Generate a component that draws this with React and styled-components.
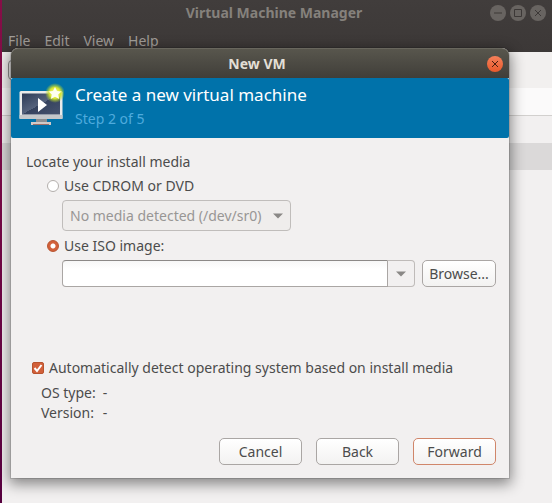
import React, { useState } from 'react';
import styled, { createGlobalStyle } from 'styled-components';

const GlobalStyle = createGlobalStyle`
    * {
        box-sizing: border-box;
    }
    body {
        margin: 0;
        background: #f2f0f0;
        color: #4c4c4c;
        font: 14px/20px "Noto Sans", sans-serif;
    }
    button, input, select {
        margin: 0;
        font: inherit;
        color: inherit;
    }
`;

const Desktop = styled.div`
    position: relative;
    min-height: 100vh;
    border-left: 2px solid;
    border-image: linear-gradient(#860e47, #56003f) 1;
    overflow: hidden;
`;

const ManagerHeader = styled.header`
    background: linear-gradient(#413d3c, #3c3837);
    color: #a19d98;
`;

const ManagerTitle = styled.div`
    display: grid;
    grid-template-columns: 1fr auto 1fr;
    align-items: center;
    height: 26px;
    padding-right: 6px;
    color: #85817c;

    h1 {
        grid-column: 2;
        margin: 0;
        font-size: 14px;
    }
`;

const WindowControls = styled.div`
    display: flex;
    justify-content: flex-end;
    gap: 4px;
`;

const RoundButton = styled.button`
    display: flex;
    width: 16px;
    height: 16px;
    padding: 0;
    border: 0;
    border-radius: 50%;
    background: ${(props) => (props.$active ? 'linear-gradient(#f5805a, #e9592b)' : '#686461')};
    color: ${(props) => (props.$active ? '#4a1f10' : '#3c3837')};

    svg {
        width: 16px;
        height: 16px;
        fill: none;
        stroke: currentColor;
    }
`;

const MenuBar = styled.nav`
    display: flex;
    gap: 14px;
    height: 26px;
    padding: 5px 6px;

    button {
        padding: 0;
        border: 0;
        background: none;
        line-height: 20px;
    }
`;

const Toolbar = styled.div`
    height: 36px;
    padding: 8px 6px;
    background: #f2f0ef;
`;

const ToolbarItem = styled.div`
    width: 34px;
    height: 20px;
    border: 1px solid #8f8d8b;
    border-radius: 4px;
`;

const ListHeader = styled.div`
    height: 28px;
    padding: 4px 6px;
    border-bottom: 1px solid #d2d0ce;
    background: #fbfafa;
`;

const ListRow = styled.div`
    height: 27px;
    background: ${(props) => (props.$selected ? '#dbd9d9' : '#f2f0f0')};
`;

const Dialog = styled.section`
    position: absolute;
    top: 48px;
    left: 9px;
    right: 43px;
    border-radius: 7px 7px 0 0;
    background: #f2f0f0;
    box-shadow: 0 4px 14px 2px rgba(0, 0, 0, 0.45), 0 0 0 1px rgba(0, 0, 0, 0.12);
`;

const DialogTitle = styled.div`
    display: grid;
    grid-template-columns: 1fr auto 1fr;
    align-items: center;
    justify-items: end;
    height: 30px;
    padding-right: 6px;
    border-top: 1px solid #69675e;
    border-radius: 7px 7px 0 0;
    background: linear-gradient(#58564d, #403e39);
    color: #e3dfd6;

    h2 {
        grid-column: 2;
        margin: 0;
        font-size: 14px;
    }
`;

const Banner = styled.header`
    display: flex;
    gap: 11px;
    height: 60px;
    padding: 5px 8px;
    border-radius: 2px;
    background: #0072aa;
    color: #fff;

    h3 {
        margin: 0;
        font-size: 17px;
        font-weight: normal;
        line-height: 24px;
    }
    p {
        margin: 2px 0 0;
        color: #4fabdd;
    }
`;

const BannerIcon = styled.svg`
    width: 45px;
    height: 43px;
`;

const Form = styled.form`
    padding: 12px 13px 13px 15px;
`;

const Line = styled.div`
    line-height: 24px;
`;

const Option = styled.label`
    display: flex;
    align-items: center;
    gap: 5px;
    height: 24px;
    margin-left: ${(props) => props.$indent || 0}px;
`;

const Radio = styled.input`
    appearance: none;
    width: 12px;
    height: 12px;
    border: 1px solid #b3afac;
    border-radius: 50%;
    background: #fff;

    &:checked {
        border-color: #b8532e;
        background: radial-gradient(circle, #fff 2px, #d2603a 3px);
    }
`;

const TickBox = styled.span`
    display: grid;

    input, svg {
        grid-area: 1 / 1;
        width: 12px;
        height: 12px;
    }
    input {
        appearance: none;
        border: 1px solid #b3afac;
        border-radius: 2px;
        background: #fff;
    }
    input:checked {
        border-color: #b8532e;
        background: #d2603a;
    }
    svg {
        fill: none;
        stroke: #fff;
        stroke-width: 2;
        pointer-events: none;
    }
    input:not(:checked) + svg {
        visibility: hidden;
    }
`;

const Fields = styled.div`
    display: flex;
    gap: 7px;
    margin: 2px 0 3px 36px;
`;

const SelectBox = styled.div`
    display: grid;
    align-items: center;

    select {
        grid-area: 1 / 1;
        appearance: none;
        height: 31px;
        padding: 0 28px 0 7px;
        border: 1px solid #c0bdbb;
        border-radius: 4px;
        background: #efedec;
        color: #989695;
        opacity: 1;
    }
    svg {
        grid-area: 1 / 1;
        justify-self: end;
        margin-right: 8px;
        pointer-events: none;
    }
`;

const Combo = styled.div`
    display: flex;
    flex: 1;
    height: 27px;

    input {
        flex: 1;
        min-width: 0;
        padding: 0 6px;
        border: 1px solid #aaa6a4;
        border-top-color: #8c8987;
        border-radius: 4px 0 0 4px;
        background: linear-gradient(#f7f7f7, #fff 8px);
    }
    button {
        width: 27px;
        padding: 0;
        border: 1px solid #bfbbb9;
        border-left: 0;
        border-radius: 0 4px 4px 0;
        background: #f2f0f0;
        line-height: 0;
    }
`;

const Button = styled.button`
    width: ${(props) => props.$width || 83}px;
    height: 27px;
    padding: 0;
    border: 1px solid ${(props) => (props.$primary ? '#d0866a' : '#aaa6a4')};
    border-radius: 5px;
    background: linear-gradient(#fff, #f3f2f1);
    line-height: 20px;
`;

const Details = styled.dl`
    display: grid;
    grid-template-columns: auto 1fr;
    column-gap: 7px;
    margin: 3px 0 0 15px;

    dd {
        margin: 0;
    }
`;

const Actions = styled.div`
    display: flex;
    justify-content: flex-end;
    gap: 14px;
    margin-top: 15px;
`;

const Spacer = styled.div`
    height: 66px;
`;

const menus = ['File', 'Edit', 'View', 'Help'];

const controls = [
    { name: 'Minimize', path: 'M4 8h8' },
    { name: 'Maximize', path: 'M4.5 4.5h7v7h-7z' },
    { name: 'Close', path: 'M5 5l6 6M11 5l-6 6' }
];

function Arrow() {
    return (
        <svg width="10" height="6" viewBox="0 0 10 6" fill="#8a8886">
            <path d="M0 0.5h10L5 5.5z" />
        </svg>
    );
}

function VmIcon() {
    return (
        <BannerIcon viewBox="0 0 45 43" aria-hidden="true">
            <defs>
                <linearGradient id="screen" x1="0" y1="0" x2="1" y2="1">
                    <stop offset="0" stopColor="#2c3a56" />
                    <stop offset="0.5" stopColor="#56637d" />
                    <stop offset="0.5" stopColor="#35425e" />
                    <stop offset="1" stopColor="#46536f" />
                </linearGradient>
                <radialGradient id="glow">
                    <stop offset="0" stopColor="#fbffb0" />
                    <stop offset="0.55" stopColor="#d8e62e" />
                    <stop offset="1" stopColor="#a9cf2a" stopOpacity="0" />
                </radialGradient>
            </defs>
            <rect x="0.5" y="8" width="43" height="28" rx="1.5" fill="#e9eaea" />
            <rect x="0.5" y="32" width="43" height="4" fill="#c4c7ca" />
            <rect x="3" y="10.5" width="38" height="21" fill="url(#screen)" />
            <path d="M19 15v14l9-7z" fill="#fff" />
            <path d="M17 36h11v3H17z" fill="#8d8f92" />
            <path d="M12 39h20v3H12z" fill="#d1cac8" />
            <path d="M14 41h16v1H14z" fill="#9b6f68" />
            <circle cx="36" cy="10" r="10" fill="url(#glow)" />
            <path d="M36 4l2 4 4.500.5-3.300 3 1 4.500-4.200-2.200-4.200 2.200 1-4.500-3.300-3L34 8z" fill="#fffff0" />
        </BannerIcon>
    );
}

function App() {
    const [source, setSource] = useState('iso');
    const [detect, setDetect] = useState(true);

    return (
        <Desktop>
            <GlobalStyle />
            <ManagerHeader>
                <ManagerTitle>
                    <h1>Virtual Machine Manager</h1>
                    <WindowControls>
                        {controls.map((control) => (
                            <RoundButton key={control.name} aria-label={control.name}>
                                <svg viewBox="0 0 16 16"><path d={control.path} /></svg>
                            </RoundButton>
                        ))}
                    </WindowControls>
                </ManagerTitle>
                <MenuBar>
                    {menus.map((menu) => <button key={menu}>{menu}</button>)}
                </MenuBar>
            </ManagerHeader>
            <Toolbar><ToolbarItem /></Toolbar>
            <ListHeader />
            <ListRow />
            <ListRow $selected />

            <Dialog role="dialog" aria-labelledby="dialog-title">
                <DialogTitle>
                    <h2 id="dialog-title">New VM</h2>
                    <RoundButton $active aria-label="Close dialog">
                        <svg viewBox="0 0 16 16"><path d="M5 5l6 6M11 5l-6 6" /></svg>
                    </RoundButton>
                </DialogTitle>
                <Banner>
                    <VmIcon />
                    <div>
                        <h3>Create a new virtual machine</h3>
                        <p>Step 2 of 5</p>
                    </div>
                </Banner>
                <Form onSubmit={(e) => e.preventDefault()}>
                    <Line>Locate your install media</Line>
                    <Option $indent={21}>
                        <Radio
                            type="radio"
                            name="source"
                            checked={source === 'cdrom'}
                            onChange={() => setSource('cdrom')}
                        />
                        Use CDROM or DVD
                    </Option>
                    <Fields>
                        <SelectBox>
                            <select disabled aria-label="CDROM or DVD device">
                                <option>No media detected (/dev/sr0)</option>
                            </select>
                            <Arrow />
                        </SelectBox>
                    </Fields>
                    <Option $indent={21}>
                        <Radio
                            type="radio"
                            name="source"
                            checked={source === 'iso'}
                            onChange={() => setSource('iso')}
                        />
                        Use ISO image:
                    </Option>
                    <Fields>
                        <Combo>
                            <input type="text" aria-label="ISO image path" />
                            <button type="button" aria-label="Recent images"><Arrow /></button>
                        </Combo>
                        <Button type="button" $width={74}>Browse...</Button>
                    </Fields>
                    <Spacer />
                    <Option $indent={6}>
                        <TickBox>
                            <input
                                type="checkbox"
                                checked={detect}
                                onChange={(e) => setDetect(e.target.checked)}
                            />
                            <svg viewBox="0 0 12 12"><path d="M2.5 6l2.500 3 4.500-6" /></svg>
                        </TickBox>
                        Automatically detect operating system based on install media
                    </Option>
                    <Details>
                        <dt>OS type:</dt>
                        <dd>-</dd>
                        <dt>Version:</dt>
                        <dd>-</dd>
                    </Details>
                    <Actions>
                        <Button type="button">Cancel</Button>
                        <Button type="button">Back</Button>
                        <Button type="submit" $primary>Forward</Button>
                    </Actions>
                </Form>
            </Dialog>
        </Desktop>
    );
}

export default App;
